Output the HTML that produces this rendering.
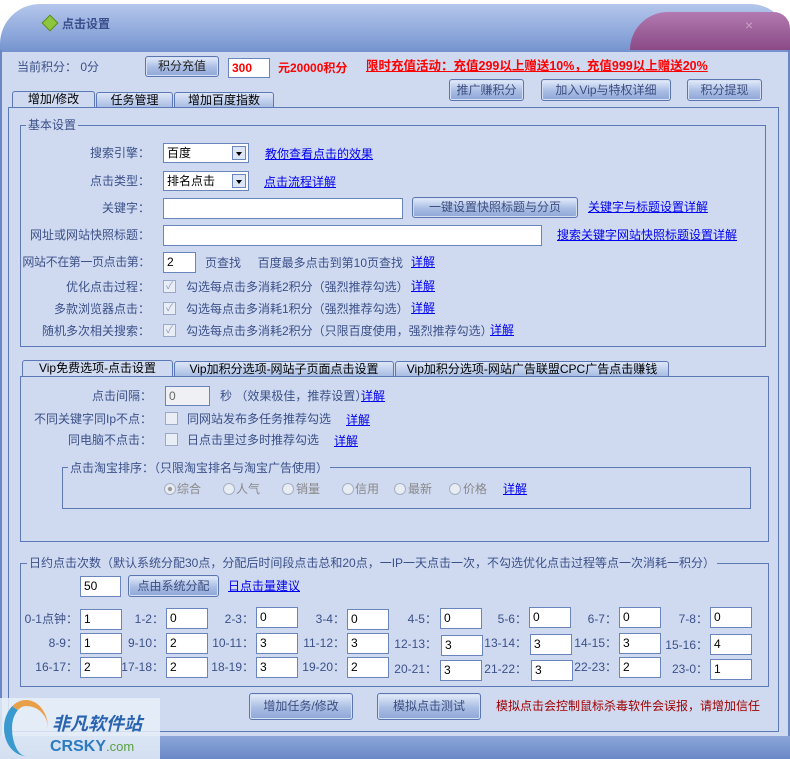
<!DOCTYPE html>
<html><head><meta charset="utf-8">
<style>
*{margin:0;padding:0;box-sizing:border-box}
body{width:790px;height:759px;overflow:hidden;background:#fff;font-family:"Liberation Sans","Noto Sans CJK SC","WenQuanYi Zen Hei",sans-serif;font-size:12px;color:#3c5088;position:relative}
.a{position:absolute;white-space:nowrap;line-height:14px}
.r{text-align:right}
.lk{color:#0000ee;text-decoration:underline}
.in{position:absolute;background:#fff;border:1px solid #6a84bd;color:#000;font-size:12px;line-height:18px;padding-left:3px}
.btn{position:absolute;border:1px solid #5a75b0;border-radius:3px;background:linear-gradient(#e4ecfa,#a9bde4 55%,#8fa6d6);color:#3c4e80;text-align:center;font-size:12px;box-shadow:inset 0 0 0 1px #d6e0f5}
.grp{position:absolute;border:1px solid #5d78b6}
.gt{position:absolute;background:#cfdaf1;padding:0 2px;line-height:14px;white-space:nowrap}
.tab{position:absolute;border:1px solid #5d78b6;border-bottom:none;border-radius:3px 3px 0 0;background:linear-gradient(#dde6f7,#a9bde3);color:#000;text-align:center;line-height:15px;font-size:12px}
.cb{position:absolute;width:13px;height:13px;border:1px solid #9aa9c8;background:#e8edf6;color:#8a9bbd;font-size:10px;line-height:11px;text-align:center}
.rd{position:absolute;width:12px;height:12px;border:1px solid #a5b0c4;border-radius:50%;background:#e8ecf3}
.sel{position:absolute;background:#fff;border:1px solid #6a84bd;color:#000;line-height:18px;padding-left:3px}
.sel i{position:absolute;right:2px;top:2px;width:14px;height:14px;border:1px solid #6a84bd;background:#dde6f6}
.sel i:after{content:"";position:absolute;left:3px;top:5px;border:3px solid transparent;border-top:4px solid #000}
</style></head><body>
<div style="position:absolute;left:0;top:0;width:790px;height:759px;background:#cfdaf1"></div>
<div style="position:absolute;left:0;top:0;width:790px;height:50px;background:#fff"></div>
<div style="position:absolute;left:0;top:4px;width:790px;height:48px;border-radius:40px 40px 0 0;background:linear-gradient(#b4c6ea,#8fa9dc 60%,#7592cd)"></div>
<div style="position:absolute;left:630px;top:12px;width:160px;height:38px;border-radius:70px 30px 0 0;background:linear-gradient(#b27ab0,#8a4a86)"></div>
<div class="a" style="left:745px;top:18px;color:#c9a0c8;font-size:14px">×</div>
<div style="position:absolute;left:44px;top:17px;width:12px;height:12px;background:#8cc63e;transform:rotate(45deg);border:1px solid #5f8a20"></div>
<div class="a" style="left:62px;top:17px;font-weight:bold;color:#3a4e8c">点击设置</div>
<div style="position:absolute;left:0;top:50px;width:2px;height:709px;background:#6a86c4"></div>
<div style="position:absolute;left:788px;top:50px;width:2px;height:709px;background:#6a86c4"></div>

<div class="a" style="left:17px;top:60px">当前积分： 0分</div>
<div class="btn" style="left:145px;top:56px;width:74px;height:21px;line-height:19px;color:#222">积分充值</div>
<div class="in" style="left:228px;top:58px;width:42px;height:20px;color:#f00;font-weight:bold">300</div>
<div class="a" style="left:278px;top:61px;color:#f00;font-weight:bold">元20000积分</div>
<div class="a" style="left:366px;top:59px;color:#f00;font-weight:bold;text-decoration:underline;font-size:12.5px">限时充值活动：充值299以上赠送10%，充值999以上赠送20%</div>
<div class="btn" style="left:449px;top:79px;width:75px;height:22px;line-height:20px">推广赚积分</div>
<div class="btn" style="left:541px;top:79px;width:130px;height:22px;line-height:20px">加入Vip与特权详细</div>
<div class="btn" style="left:687px;top:79px;width:75px;height:22px;line-height:20px">积分提现</div>

<div class="tab" style="left:12px;top:91px;width:83px;height:17px;background:#cfdaf1">增加/修改</div>
<div class="tab" style="left:96px;top:92px;width:77px;height:15px">任务管理</div>
<div class="tab" style="left:174px;top:92px;width:100px;height:15px">增加百度指数</div>
<div class="grp" style="left:8px;top:107px;width:771px;height:625px"></div>

<div class="grp" style="left:20px;top:125px;width:746px;height:222px"></div>
<div class="gt" style="left:26px;top:118px">基本设置</div>
<div class="a r" style="left:20px;width:130px;top:146px">搜索引擎：</div>
<div class="sel" style="left:163px;top:143px;width:86px;height:20px">百度<i></i></div>
<div class="a lk" style="left:265px;top:147px">教你查看点击的效果</div>
<div class="a r" style="left:20px;width:130px;top:174px">点击类型：</div>
<div class="sel" style="left:163px;top:171px;width:86px;height:20px">排名点击<i></i></div>
<div class="a lk" style="left:264px;top:175px">点击流程详解</div>
<div class="a r" style="left:20px;width:130px;top:201px">关键字：</div>
<div class="in" style="left:163px;top:198px;width:240px;height:21px"></div>
<div class="btn" style="left:412px;top:197px;width:166px;height:21px;line-height:19px">一键设置快照标题与分页</div>
<div class="a lk" style="left:588px;top:200px">关键字与标题设置详解</div>
<div class="a r" style="left:20px;width:130px;top:228px">网址或网站快照标题：</div>
<div class="in" style="left:163px;top:225px;width:379px;height:21px"></div>
<div class="a lk" style="left:557px;top:228px">搜索关键字网站快照标题设置详解</div>
<div class="a r" style="left:20px;width:130px;top:255px;letter-spacing:-0.4px">网站不在第一页点击第：</div>
<div class="in" style="left:163px;top:252px;width:33px;height:21px">2</div>
<div class="a" style="left:205px;top:256px">页查找&nbsp;&nbsp;&nbsp;&nbsp; 百度最多点击到第10页查找</div>
<div class="a lk" style="left:411px;top:255px">详解</div>
<div class="a r" style="left:20px;width:130px;top:280px">优化点击过程：</div>
<div class="cb" style="left:163px;top:280px">✓</div>
<div class="a" style="left:186px;top:280px">勾选每点击多消耗2积分（强烈推荐勾选）</div>
<div class="a lk" style="left:411px;top:279px">详解</div>
<div class="a r" style="left:20px;width:130px;top:302px">多款浏览器点击：</div>
<div class="cb" style="left:163px;top:302px">✓</div>
<div class="a" style="left:186px;top:302px">勾选每点击多消耗1积分（强烈推荐勾选）</div>
<div class="a lk" style="left:411px;top:301px">详解</div>
<div class="a r" style="left:20px;width:130px;top:324px">随机多次相关搜索：</div>
<div class="cb" style="left:163px;top:324px">✓</div>
<div class="a" style="left:186px;top:324px">勾选每点击多消耗2积分（只限百度使用，强烈推荐勾选）</div>
<div class="a lk" style="left:490px;top:323px">详解</div>

<div class="tab" style="left:22px;top:360px;width:151px;height:17px;background:#cfdaf1">Vip免费选项-点击设置</div>
<div class="tab" style="left:174px;top:361px;width:220px;height:15px">Vip加积分选项-网站子页面点击设置</div>
<div class="tab" style="left:395px;top:361px;width:274px;height:15px">Vip加积分选项-网站广告联盟CPC广告点击赚钱</div>
<div class="grp" style="left:20px;top:376px;width:749px;height:166px"></div>
<div class="a r" style="left:20px;width:132px;top:389px">点击间隔：</div>
<div class="in" style="left:165px;top:386px;width:45px;height:20px;background:#eef0f4;color:#666">0</div>
<div class="a" style="left:220px;top:389px">秒 （效果极佳，推荐设置）</div>
<div class="a lk" style="left:361px;top:389px">详解</div>
<div class="a r" style="left:20px;width:132px;top:412px">不同关键字同Ip不点：</div>
<div class="cb" style="left:165px;top:412px"></div>
<div class="a" style="left:187px;top:412px">同网站发布多任务推荐勾选</div>
<div class="a lk" style="left:346px;top:413px">详解</div>
<div class="a r" style="left:20px;width:132px;top:433px">同电脑不点击：</div>
<div class="cb" style="left:165px;top:433px"></div>
<div class="a" style="left:187px;top:433px">日点击里过多时推荐勾选</div>
<div class="a lk" style="left:334px;top:434px">详解</div>
<div class="grp" style="left:62px;top:467px;width:689px;height:42px"></div>
<div class="gt" style="left:68px;top:461px">点击淘宝排序：（只限淘宝排名与淘宝广告使用）</div>
<div class="rd" style="left:164px;top:483px;background:radial-gradient(#999 25%,#e8ecf3 35%)"></div><div class="a" style="left:177px;top:482px;color:#888">综合</div>
<div class="rd" style="left:223px;top:483px"></div><div class="a" style="left:236px;top:482px;color:#888">人气</div>
<div class="rd" style="left:282px;top:483px"></div><div class="a" style="left:296px;top:482px;color:#888">销量</div>
<div class="rd" style="left:342px;top:483px"></div><div class="a" style="left:355px;top:482px;color:#888">信用</div>
<div class="rd" style="left:394px;top:483px"></div><div class="a" style="left:408px;top:482px;color:#888">最新</div>
<div class="rd" style="left:449px;top:483px"></div><div class="a" style="left:463px;top:482px;color:#888">价格</div>
<div class="a lk" style="left:503px;top:482px">详解</div>

<div class="grp" style="left:20px;top:563px;width:749px;height:124px"></div>
<div class="gt" style="left:27px;top:556px">日约点击次数（默认系统分配30点，分配后时间段点击总和20点，一IP一天点击一次，不勾选优化点击过程等点一次消耗一积分）</div>
<div class="in" style="left:80px;top:576px;width:41px;height:21px">50</div>
<div class="btn" style="left:128px;top:575px;width:91px;height:22px;line-height:20px">点由系统分配</div>
<div class="a lk" style="left:228px;top:579px">日点击量建议</div>

<div class="a r" style="left:18px;width:60px;top:612px">0-1点钟：</div><div class="in" style="left:80px;top:609px;width:42px;height:21px">1</div>
<div class="a r" style="left:110px;width:54px;top:612px">1-2：</div><div class="in" style="left:166px;top:608px;width:42px;height:21px">0</div>
<div class="a r" style="left:200px;width:54px;top:612px">2-3：</div><div class="in" style="left:256px;top:607px;width:42px;height:21px">0</div>
<div class="a r" style="left:290px;width:55px;top:612px">3-4：</div><div class="in" style="left:347px;top:609px;width:42px;height:21px">0</div>
<div class="a r" style="left:380px;width:57px;top:612px">4-5：</div><div class="in" style="left:440px;top:608px;width:42px;height:21px">0</div>
<div class="a r" style="left:470px;width:57px;top:612px">5-6：</div><div class="in" style="left:529px;top:607px;width:42px;height:21px">0</div>
<div class="a r" style="left:560px;width:57px;top:612px">6-7：</div><div class="in" style="left:619px;top:607px;width:42px;height:21px">0</div>
<div class="a r" style="left:650px;width:58px;top:612px">7-8：</div><div class="in" style="left:710px;top:607px;width:42px;height:21px">0</div>

<div class="a r" style="left:18px;width:60px;top:636px">8-9：</div><div class="in" style="left:80px;top:633px;width:42px;height:21px">1</div>
<div class="a r" style="left:110px;width:54px;top:636px">9-10：</div><div class="in" style="left:166px;top:633px;width:42px;height:21px">2</div>
<div class="a r" style="left:200px;width:54px;top:636px">10-11：</div><div class="in" style="left:256px;top:633px;width:42px;height:21px">3</div>
<div class="a r" style="left:290px;width:55px;top:636px">11-12：</div><div class="in" style="left:347px;top:633px;width:42px;height:21px">3</div>
<div class="a r" style="left:380px;width:57px;top:637px">12-13：</div><div class="in" style="left:441px;top:635px;width:42px;height:21px">3</div>
<div class="a r" style="left:470px;width:57px;top:636px">13-14：</div><div class="in" style="left:530px;top:634px;width:42px;height:21px">3</div>
<div class="a r" style="left:560px;width:57px;top:636px">14-15：</div><div class="in" style="left:619px;top:633px;width:42px;height:21px">3</div>
<div class="a r" style="left:650px;width:58px;top:638px">15-16：</div><div class="in" style="left:710px;top:634px;width:42px;height:21px">4</div>

<div class="a r" style="left:18px;width:60px;top:660px">16-17：</div><div class="in" style="left:80px;top:657px;width:42px;height:21px">2</div>
<div class="a r" style="left:110px;width:54px;top:660px">17-18：</div><div class="in" style="left:166px;top:657px;width:42px;height:21px">2</div>
<div class="a r" style="left:200px;width:54px;top:660px">18-19：</div><div class="in" style="left:256px;top:657px;width:42px;height:21px">3</div>
<div class="a r" style="left:290px;width:55px;top:660px">19-20：</div><div class="in" style="left:347px;top:657px;width:42px;height:21px">2</div>
<div class="a r" style="left:380px;width:57px;top:662px">20-21：</div><div class="in" style="left:440px;top:660px;width:42px;height:21px">3</div>
<div class="a r" style="left:470px;width:57px;top:662px">21-22：</div><div class="in" style="left:531px;top:660px;width:42px;height:21px">3</div>
<div class="a r" style="left:560px;width:57px;top:660px">22-23：</div><div class="in" style="left:619px;top:657px;width:42px;height:21px">2</div>
<div class="a r" style="left:650px;width:58px;top:662px">23-0：</div><div class="in" style="left:710px;top:659px;width:42px;height:21px">1</div>

<div class="btn" style="left:249px;top:693px;width:104px;height:27px;line-height:25px">增加任务/修改</div>
<div class="btn" style="left:377px;top:693px;width:104px;height:27px;line-height:25px">模拟点击测试</div>
<div class="a" style="left:496px;top:699px;color:#a00000">模拟点击会控制鼠标杀毒软件会误报，请增加信任</div>

<div style="position:absolute;left:0;top:736px;width:790px;height:23px;background:linear-gradient(#8ca6da,#6a88c6)"></div>
<div style="position:absolute;left:0;top:698px;width:160px;height:61px;background:rgba(230,238,248,0.85)"></div>
<div style="position:absolute;left:4px;top:700px;width:44px;height:56px;border-radius:50%;border-left:8px solid #3a9ad0;border-top:6px solid #e8a048"></div>
<div class="a" style="left:52px;top:714px;font-size:18px;line-height:20px;font-weight:bold;color:#2a64b0;font-style:italic">非凡软件站</div>
<div class="a" style="left:50px;top:738px;font-size:16px;line-height:18px;font-weight:bold;color:#2c7ac0">CRSKY<span style="color:#5aa040;font-weight:normal;font-size:13px">.com</span></div>
</body></html>
